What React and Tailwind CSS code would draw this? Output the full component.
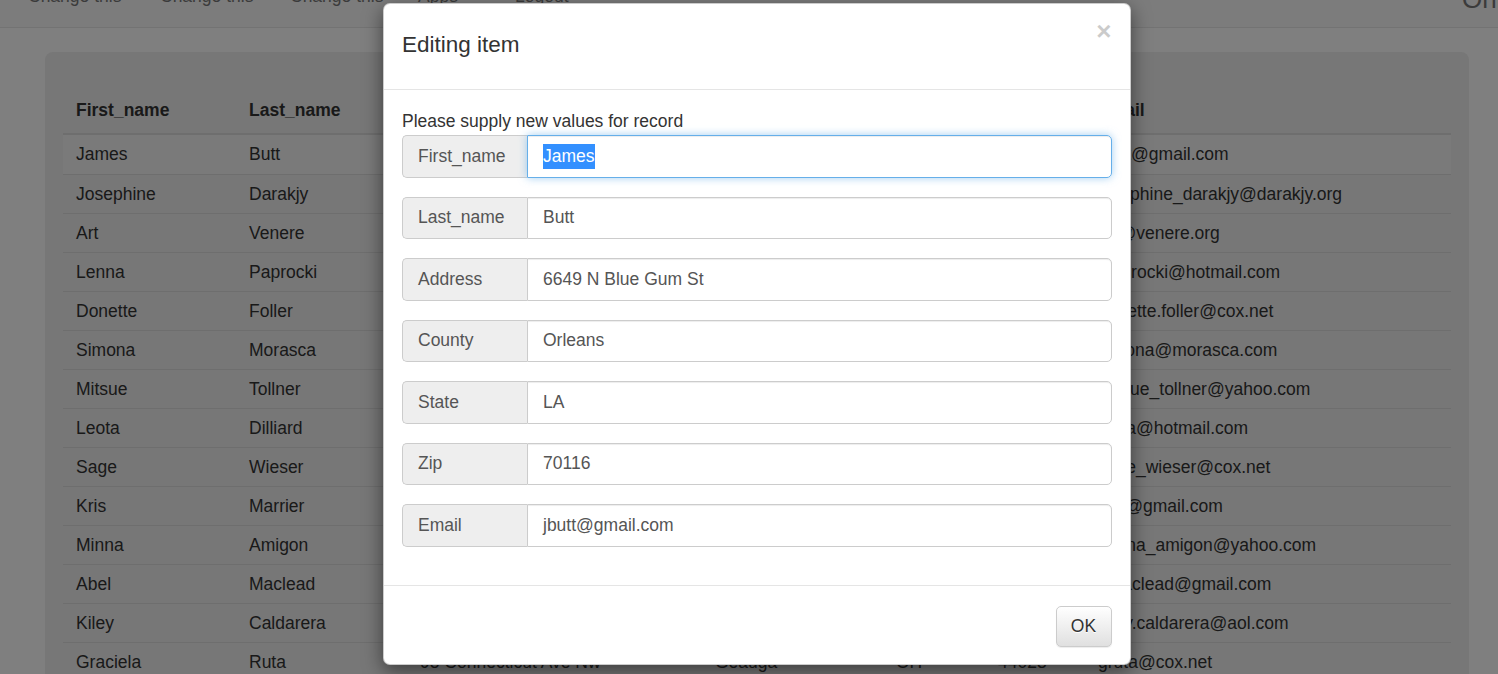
const rows = [
  ['James', 'Butt', '6649 N Blue Gum St', 'Orleans', 'LA', '70116', 'jbutt@gmail.com'],
  ['Josephine', 'Darakjy', '4 B Blue Ridge Blvd', 'Livingston', 'MI', '48116', 'josephine_darakjy@darakjy.org'],
  ['Art', 'Venere', '8 W Cerritos Ave #54', 'Gloucester', 'NJ', '08014', 'art@venere.org'],
  ['Lenna', 'Paprocki', '639 Main St', 'Anchorage', 'AK', '99501', 'lpaprocki@hotmail.com'],
  ['Donette', 'Foller', '34 Center St', 'Butler', 'OH', '45011', 'donette.foller@cox.net'],
  ['Simona', 'Morasca', '3 Mcauley Dr', 'Ashland', 'OH', '44805', 'simona@morasca.com'],
  ['Mitsue', 'Tollner', '7 Eads St', 'Cook', 'IL', '60632', 'mitsue_tollner@yahoo.com'],
  ['Leota', 'Dilliard', '7 W Jackson Blvd', 'Santa Clara', 'CA', '95111', 'leota@hotmail.com'],
  ['Sage', 'Wieser', '5 Boston Ave #88', 'Minnehaha', 'SD', '57105', 'sage_wieser@cox.net'],
  ['Kris', 'Marrier', '228 Runamuck Pl #2808', 'Baltimore City', 'MD', '21224', 'kris@gmail.com'],
  ['Minna', 'Amigon', '2371 Jerrold Ave', 'Montgomery', 'PA', '19443', 'minna_amigon@yahoo.com'],
  ['Abel', 'Maclead', '37275 St Rt 17m M', 'Suffolk', 'NY', '11953', 'amaclead@gmail.com'],
  ['Kiley', 'Caldarera', '25 E 75th St #69', 'Los Angeles', 'CA', '90034', 'kiley.caldarera@aol.com'],
  ['Graciela', 'Ruta', '98 Connecticut Ave Nw', 'Geauga', 'OH', '44023', 'gruta@cox.net'],
];

const headers = ['First_name', 'Last_name', 'Address', 'County', 'State', 'Zip', 'Email'];

const fields = [
  ['First_name', 'James'],
  ['Last_name', 'Butt'],
  ['Address', '6649 N Blue Gum St'],
  ['County', 'Orleans'],
  ['State', 'LA'],
  ['Zip', '70116'],
  ['Email', 'jbutt@gmail.com'],
];

const cols = 'grid grid-cols-[173px_171px_295px_181px_102px_100px_1fr]';

const navLinks = [
  ['Change this', 'w-[132px]'],
  ['Change this', 'w-[130px]'],
  ['Change this', 'w-[128px]'],
  ['Apps', 'w-[97px]'],
  ['Logout', 'w-[100px]'],
];

const App = () => {
  return (
    <div className="relative h-[674px] overflow-hidden bg-white text-[17.5px] leading-[25px] text-[#333] font-['Liberation_Sans',Arial,sans-serif]">
      {/* page behind the modal (scrolled slightly) */}
      <div className="mt-[-35px] flex h-[63px] items-center border-b border-[#e7e7e7] bg-[#f8f8f8] pl-[28px]">
        {navLinks.map(([label, w], i) => (
          <span key={i} className={`${w} shrink-0 whitespace-nowrap text-[#777]`}>{label}</span>
        ))}
        <div className="ml-auto mt-[6px] w-[36px] overflow-hidden whitespace-nowrap text-[26px] text-[#777]">Online</div>
      </div>

      <div className="ml-[45px] mr-[29px] mt-[24px] rounded-[8px] bg-[#eee] px-[18px] pt-[38.5px] pb-[40px]">
        <div className={`${cols} border-b-2 border-[#ddd] pt-[7px] pb-[10.5px] font-bold`}>
          {headers.map((h) => (
            <div key={h} className="px-[13px]">{h}</div>
          ))}
        </div>
        {rows.map((r, i) => (
          <div
            key={i}
            className={`${cols} h-[39px] items-center ${i > 0 ? 'border-t border-[#ddd]' : ''} ${i === 0 ? 'bg-[#f5f5f5]' : ''}`}
          >
            {r.map((c, j) => (
              <div key={j} className="whitespace-nowrap px-[13px]">{c}</div>
            ))}
          </div>
        ))}
      </div>

      {/* backdrop */}
      <div className="absolute inset-0 bg-black/50" />

      {/* modal */}
      <div className="absolute left-[383px] top-[3px] w-[748px] rounded-[7px] border border-black/20 bg-white shadow-[0_6px_19px_rgba(0,0,0,0.5)]">
        <div className="flex h-[86px] items-start justify-between border-b border-[#e5e5e5] pl-[18px] pr-[18.5px] pt-[14px]">
          <h4 className="mt-[11px] text-[22.5px] leading-[32px] text-[#333]">Editing item</h4>
          <button className="text-[26px] font-bold leading-none text-black opacity-20">×</button>
        </div>

        <div className="pl-[18px] pr-[18.5px] pt-[18.5px] pb-[38.5px]">
          <div className="leading-[25px]">Please supply new values for record</div>
          <div className="mt-[1.5px] flex flex-col gap-[19px]">
            {fields.map(([label, value], i) => (
              <div key={label} className="flex h-[42.5px]">
                <div className="flex w-[125px] shrink-0 items-center rounded-l-[5px] border border-r-0 border-[#ccc] bg-[#eee] px-[15px] text-[#555]">
                  {label}
                </div>
                <div
                  className={`flex flex-1 items-center rounded-r-[5px] border px-[15px] text-[#555] ${
                    i === 0
                      ? 'border-[#66afe9] shadow-[inset_0_1px_1px_rgba(0,0,0,0.075),0_0_8px_rgba(102,175,233,0.6)]'
                      : 'border-[#ccc] shadow-[inset_0_1px_1px_rgba(0,0,0,0.075)]'
                  }`}
                >
                  {i === 0 ? <span className="bg-[#3390ff] text-white">{value}</span> : value}
                </div>
              </div>
            ))}
          </div>
        </div>

        <div className="flex justify-end border-t border-[#e5e5e5] pl-[18px] pr-[18.5px] pt-[20px] pb-[17px]">
          <button className="h-[41px] w-[56px] rounded-[5px] border border-[#ccc] bg-gradient-to-b from-white to-[#e0e0e0] text-[#333] shadow-[inset_0_1px_0_rgba(255,255,255,0.15),0_1px_1px_rgba(0,0,0,0.075)] [text-shadow:0_1px_0_#fff]">
            OK
          </button>
        </div>
      </div>
    </div>
  );
};

export default App;
